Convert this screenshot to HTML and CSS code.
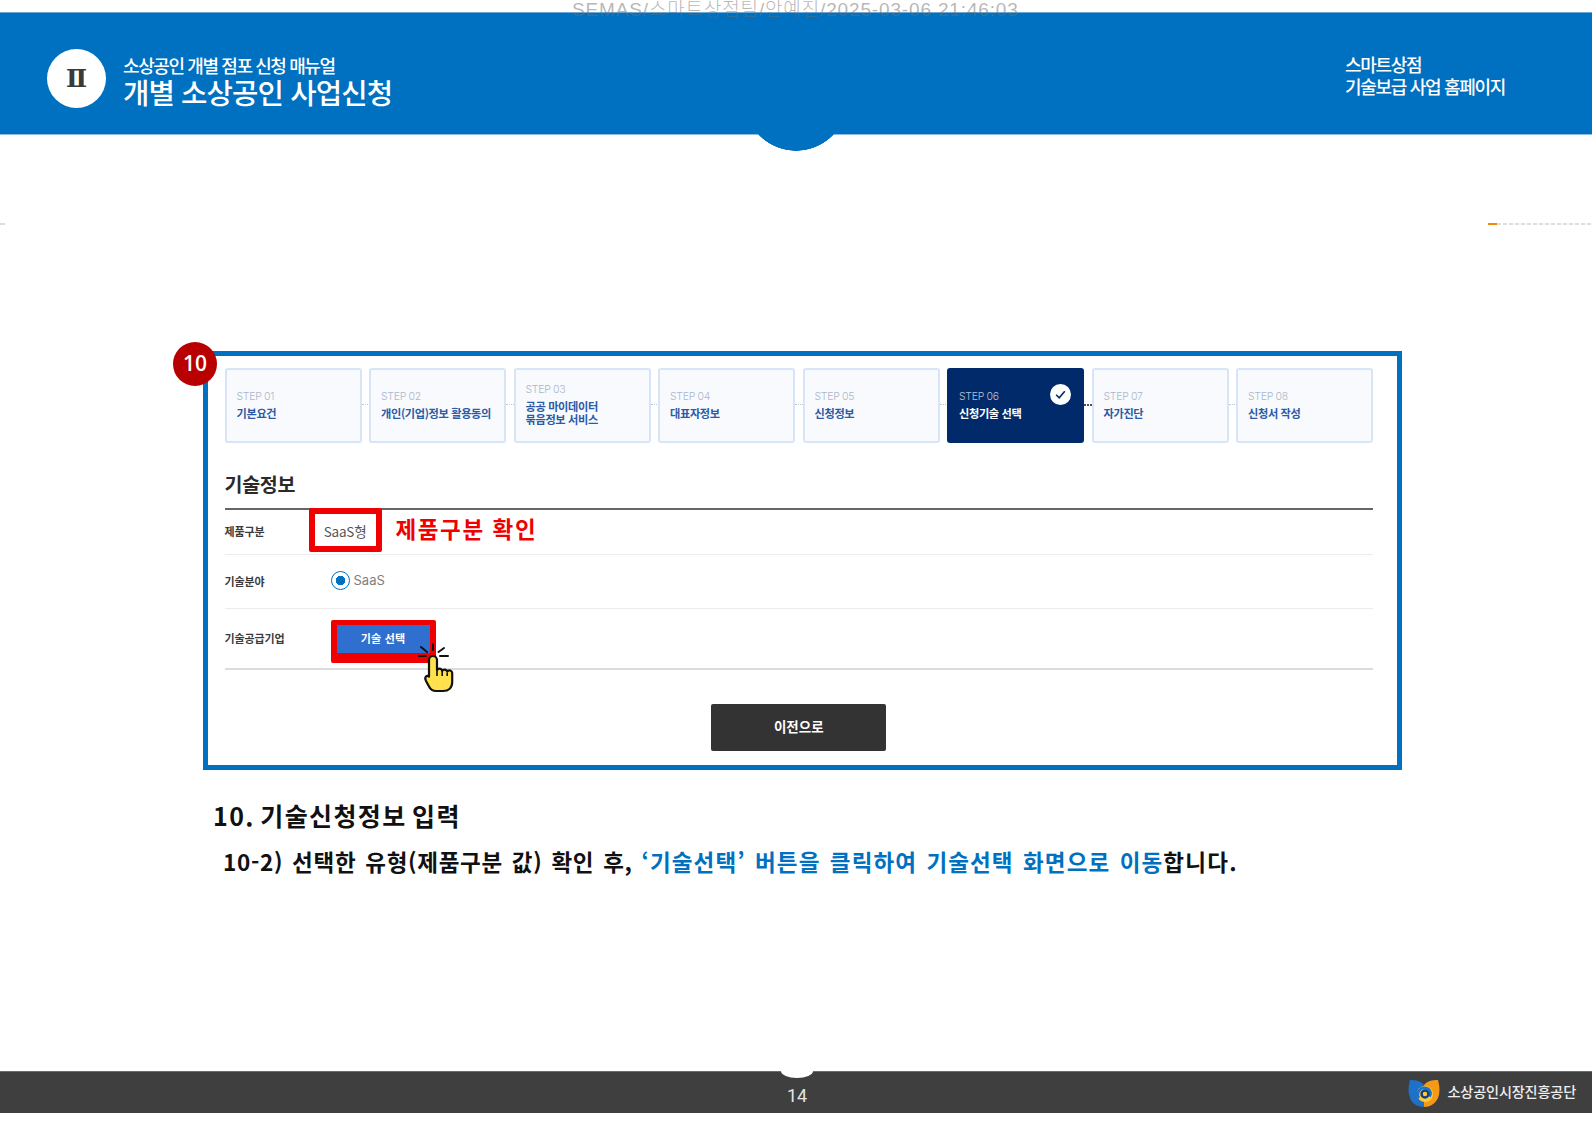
FILE: index.html
```html
<!DOCTYPE html>
<html lang="ko">
<head>
<meta charset="utf-8">
<title>개별 소상공인 사업신청</title>
<link rel="stylesheet" href="styles.css">
</head>
<body>
<div class="watermark">SEMAS/스마트상점팀/안예진/2025-03-06 21:46:03</div>
<header class="top">
  <div class="top-left">
    <div class="chapter">Ⅱ</div>
    <div class="top-titles">
      <div class="top-sub">소상공인 개별 점포 신청 매뉴얼</div>
      <div class="top-main">개별 소상공인 사업신청</div>
    </div>
  </div>
  <div class="top-right">스마트상점<br>기술보급 사업 홈페이지</div>
</header>
<div class="dashes">
  <span class="dash-left"></span>
  <span class="dash-right"><i class="dash-orange"></i><i class="dash-gray"></i></span>
</div>
<section class="frame">
  <div class="badge">10</div>
  <div class="steps">
    <div class="step"><span class="step-no">STEP 01</span><b class="step-name">기본요건</b></div>
    <div class="step"><span class="step-no">STEP 02</span><b class="step-name">개인(기업)정보 활용동의</b></div>
    <div class="step"><span class="step-no">STEP 03</span><b class="step-name">공공 마이데이터<br>묶음정보 서비스</b></div>
    <div class="step"><span class="step-no">STEP 04</span><b class="step-name">대표자정보</b></div>
    <div class="step"><span class="step-no">STEP 05</span><b class="step-name">신청정보</b></div>
    <div class="step step-active"><span class="step-no">STEP 06</span><b class="step-name">신청기술 선택</b>
      <svg class="step-check" viewBox="0 0 21 21" width="21" height="21"><circle cx="10.5" cy="10.5" r="10.5" fill="#fff"/><path d="M6.2 10.8l3 3 5.6-6.6" fill="none" stroke="#012a6b" stroke-width="1.6"/></svg>
    </div>
    <div class="step"><span class="step-no">STEP 07</span><b class="step-name">자가진단</b></div>
    <div class="step step-last"><span class="step-no">STEP 08</span><b class="step-name">신청서 작성</b></div>
  </div>
  <h2 class="info-title">기술정보</h2>
  <div class="info-table">
    <div class="row row-1">
      <div class="row-label">제품구분</div>
      <div class="red-box type-box">SaaS형</div>
      <div class="red-note">제품구분 확인</div>
    </div>
    <div class="row row-2">
      <div class="row-label">기술분야</div>
      <div class="radio-wrap"><span class="radio"></span><span class="radio-text">SaaS</span></div>
    </div>
    <div class="row row-3">
      <div class="row-label">기술공급기업</div>
      <div class="red-box pick-box"><div class="pick-btn">기술 선택</div></div>
      <svg class="hand" viewBox="0 0 36 50" width="36" height="50">
        <g stroke="#111" stroke-width="2" stroke-linecap="round" fill="none">
          <path d="M15 1v6M20.500 9l5.500-4M22 13h8M1 13h7M3 4l6 5"/>
        </g>
        <path d="M11 17a4 4 0 0 1 8 0v10a2.800 2.800 0 0 1 5.200.8 2.800 2.800 0 0 1 5 .7 2.800 2.800 0 0 1 5 1.500v9c0 6-3.700 9-9 9h-7c-3.500 0-5.800-1.500-7.200-4.500L8 38c-.8-1.600-1-3.500 0-4.500 1-1 2.300-.8 3 .2z" fill="#ffe14d" stroke="#111" stroke-width="2.200" stroke-linejoin="round"/>
        <path d="M19 27v6M24.200 28v5M29.200 29.500V33" stroke="#111" stroke-width="1.600" fill="none"/>
      </svg>
    </div>
  </div>
  <div class="actions"><div class="prev-btn">이전으로</div></div>
</section>
<section class="notes">
  <h1 class="note-title">10. 기술신청정보 입력</h1>
  <p class="note-text">10-2) 선택한 유형(제품구분 값) 확인 후, <span class="note-blue">‘기술선택’ 버튼을 클릭하여 기술선택 화면으로 이동</span><span class="note-end">합니다.</span></p>
</section>
<footer class="bottom">
  <span class="page-no">14</span>
  <div class="org">
    <svg class="org-logo" viewBox="0 0 32 28" width="32" height="28">
      <path d="M2 1c6 0 11 1 14 5v22C10 28 4 25 2 19 0 14 0 8 2 1z" fill="#1d72c8"/>
      <path d="M30 1c-6 0-11 1-14 5v22c6 0 11-3 14-9 2-5 2-11 0-18z" fill="#f49a16"/>
      <circle cx="17" cy="15" r="8" fill="#ffc93a"/>
      <path d="M11 19c-3-5 1-11 7-10 4 .7 6 5 3.500 8.500" fill="none" stroke="#1d72c8" stroke-width="2.500"/>
      <circle cx="17" cy="15" r="3.500" fill="none" stroke="#123f80" stroke-width="2.500"/>
    </svg>
    <span class="org-name">소상공인시장진흥공단</span>
  </div>
</footer>
</body>
</html>
```

FILE: styles.css
```css
* { box-sizing: border-box; }
html, body { margin: 0; padding: 0; background: #fff; }
body {
  width: 1592px;
  height: 1125px;
  position: relative;
  overflow: hidden;
  padding-top: 12px;
  font-family: "Noto Sans CJK KR", "Noto Sans", sans-serif;
  color: #111;
}
.watermark {
  position: absolute;
  z-index: 5;
  top: -3px;
  left: 572px;
  font-family: "Liberation Sans", "Noto Sans CJK KR", sans-serif;
  font-size: 19px;
  font-weight: 300;
  line-height: 26px;
  letter-spacing: 0.85px;
  color: rgba(110, 110, 110, 0.5);
  white-space: nowrap;
}
.top {
  position: relative;
  height: 123px;
  background: #0070c0;
  border-top: 1px solid #6aa9da;
  border-bottom: 1px solid #8dbde2;
  display: flex;
  justify-content: space-between;
  align-items: center;
  padding: 10px 87px 0 47px;
  color: #fff;
}
.top::after {
  content: "";
  position: absolute;
  left: 746px;
  bottom: -18px;
  width: 100px;
  height: 18px;
  background: radial-gradient(circle 52px at 50px -35px, #0070c0 51.500px, rgba(0, 112, 192, 0) 52px);
}
.top-left { display: flex; align-items: center; gap: 17px; margin-bottom: 1px; }
.chapter {
  width: 59px;
  height: 59px;
  border-radius: 50%;
  background: #fff;
  color: #3a3a3a;
  display: flex;
  align-items: center;
  justify-content: center;
  font-family: "DejaVu Serif", "Noto Sans CJK KR", serif;
  font-size: 25px;
  font-weight: 700;
  line-height: 1;
}
.top-titles { display: flex; flex-direction: column; margin-top: 5px; }
.top-sub { font-size: 18px; font-weight: 500; line-height: 22px; letter-spacing: -1.4px; white-space: nowrap; }
.top-main { font-size: 28.700px; font-weight: 500; line-height: 32px; letter-spacing: -0.9px; white-space: nowrap; }
.top-right { font-size: 18px; font-weight: 500; line-height: 22px; letter-spacing: -1.3px; white-space: nowrap; margin-top: -7px; }
.dashes {
  height: 2px;
  margin-top: 88px;
  display: flex;
  justify-content: space-between;
}
.dash-left { width: 5px; height: 2px; background: #dedede; }
.dash-right { width: 104px; height: 2px; display: flex; }
.dash-orange { width: 9px; height: 2px; background: #ed8a0a; }
.dash-gray {
  flex: 1;
  height: 2px;
  background: repeating-linear-gradient(90deg, #dedede 0 4px, #fff 4px 6px);
}
.frame {
  position: relative;
  width: 1199px;
  height: 419px;
  margin: 126px 0 0 203px;
  border: 5px solid #0070c0;
  padding: 12px 24px 0 16.500px;
}
.badge {
  position: absolute;
  left: -35px;
  top: -14px;
  width: 44px;
  height: 44px;
  border-radius: 50%;
  background: #b80000;
  color: #fff;
  font-size: 21px;
  font-weight: 600;
  line-height: 42px;
  text-align: center;
  font-family: "Open Sans", sans-serif;
}
.steps {
  display: grid;
  grid-template-columns: repeat(8, 1fr);
  gap: 7.500px;
  height: 75px;
}
.step {
  position: relative;
  background: #f8fafe;
  border: 2px solid #d8e5f6;
  border-radius: 3px;
  padding: 0 10px 3px;
  display: flex;
  flex-direction: column;
  justify-content: center;
}
.step::after {
  content: "";
  position: absolute;
  right: -10px;
  top: 34px;
  width: 8px;
  border-top: 1px dotted #b9c7da;
}
.step-last::after { display: none; }
.step-no {
  font-family: "Inter", sans-serif;
  font-size: 10.500px;
  font-weight: 300;
  line-height: 16px;
  letter-spacing: -0.3px;
  color: #a9b7cb;
}
.step-name {
  font-size: 11.200px;
  font-weight: 700;
  line-height: 13px;
  margin-top: 2px;
  letter-spacing: -0.35px;
  color: #2b5aa6;
  white-space: nowrap;
}
.step-active { background: #012a6b; border-color: #012a6b; }
.step-active .step-no { color: #b7c2d3; }
.step-active .step-name { color: #fff; }
.step-active::after { border-top: 2px dotted #44546a; }
.step-check { position: absolute; right: 11px; top: 14px; }
.info-title {
  margin: 27px 0 0;
  font-size: 19.500px;
  font-weight: 700;
  line-height: 28px;
  color: #2a2a2a;
  letter-spacing: -0.3px;
}
.info-table {
  margin-top: 10px;
  border-top: 2px solid #666;
}
.row {
  position: relative;
  display: flex;
  align-items: center;
  border-bottom: 1px solid #ececec;
}
.row-1 { height: 45px; padding-bottom: 3px; }
.row-2 { height: 54px; padding-bottom: 2px; }
.row-3 { height: 61px; border-bottom: 2px solid #dcdcdc; padding-bottom: 1px; }
.row-label {
  width: 106px;
  font-size: 11px;
  font-weight: 700;
  color: #3b3b3b;
  letter-spacing: -0.1px;
  white-space: nowrap;
}
.red-box { border: 6px solid #f00000; border-radius: 2px; }
.type-box {
  position: relative;
  top: -1px;
  left: -22px;
  width: 73px;
  height: 44px;
  font-size: 13.500px;
  color: #555;
  line-height: 35px;
  text-align: center;
  letter-spacing: -0.2px;
  white-space: nowrap;
  margin-right: -22px;
}
.red-note {
  margin-left: 14px;
  margin-top: -5px;
  font-size: 22.500px;
  font-weight: 700;
  line-height: 30px;
  letter-spacing: 1.6px;
  color: #f00000;
  white-space: nowrap;
}
.radio-wrap { display: flex; align-items: center; gap: 4px; }
.radio {
  width: 19px;
  height: 19px;
  border-radius: 50%;
  border: 1.500px solid #0070c0;
  background: radial-gradient(circle, #0070c0 0 4.500px, #fff 5px);
}
.radio-text { font-family: "Inter", sans-serif; font-size: 13px; color: #808080; margin-top: -2px; }
.pick-box {
  position: relative;
  top: 3px;
  width: 105px;
  height: 43px;
  border-width: 5px 6px 10px;
}
.pick-btn {
  height: 100%;
  background: #2f6fd0;
  color: #fff;
  font-size: 11px;
  font-weight: 700;
  line-height: 27px;
  text-align: center;
  letter-spacing: 0.2px;
}
.hand { position: absolute; left: 193px; top: 34px; }
.actions { display: flex; justify-content: center; margin-top: 34px; }
.prev-btn {
  width: 175px;
  height: 47px;
  background: #333;
  border-radius: 2px;
  color: #fff;
  font-size: 13.500px;
  font-weight: 700;
  line-height: 45px;
  text-align: center;
}
.notes { padding: 27px 0 0 213px; }
.note-title {
  margin: 0;
  font-size: 25px;
  font-weight: 700;
  line-height: 36px;
  letter-spacing: 1.4px;
  color: #111;
  word-spacing: -3px;
}
.note-text {
  margin: 12px 0 0 10px;
  font-size: 22.500px;
  font-weight: 700;
  line-height: 32px;
  letter-spacing: 0.69px;
  word-spacing: 2px;
  color: #111;
  white-space: nowrap;
}
.note-blue { color: #0070c0; letter-spacing: 1.1px; }
.note-end { letter-spacing: 1.3px; }
.bottom {
  position: absolute;
  left: 0;
  right: 0;
  top: 1071px;
  height: 42px;
  background: #3f3f3f;
  border-top: 1px solid #6d6d6d;
  display: flex;
  justify-content: flex-end;
  align-items: center;
  padding-right: 16px;
}
.bottom::before {
  content: "";
  position: absolute;
  left: 781px;
  top: -1px;
  width: 32px;
  height: 7px;
  background: #fff;
  border-radius: 0 0 16px 16px / 0 0 7px 7px;
}
.page-no {
  position: absolute;
  left: 787px;
  top: 14px;
  font-family: "Roboto", sans-serif;
  font-size: 18px;
  line-height: 20px;
  color: #e4e4e4;
}
.org { display: flex; align-items: center; gap: 7px; }
.org-name { font-size: 14.200px; font-weight: 500; letter-spacing: -0.2px; line-height: 20px; color: #eee; white-space: nowrap; margin-top: -4px; }
```
